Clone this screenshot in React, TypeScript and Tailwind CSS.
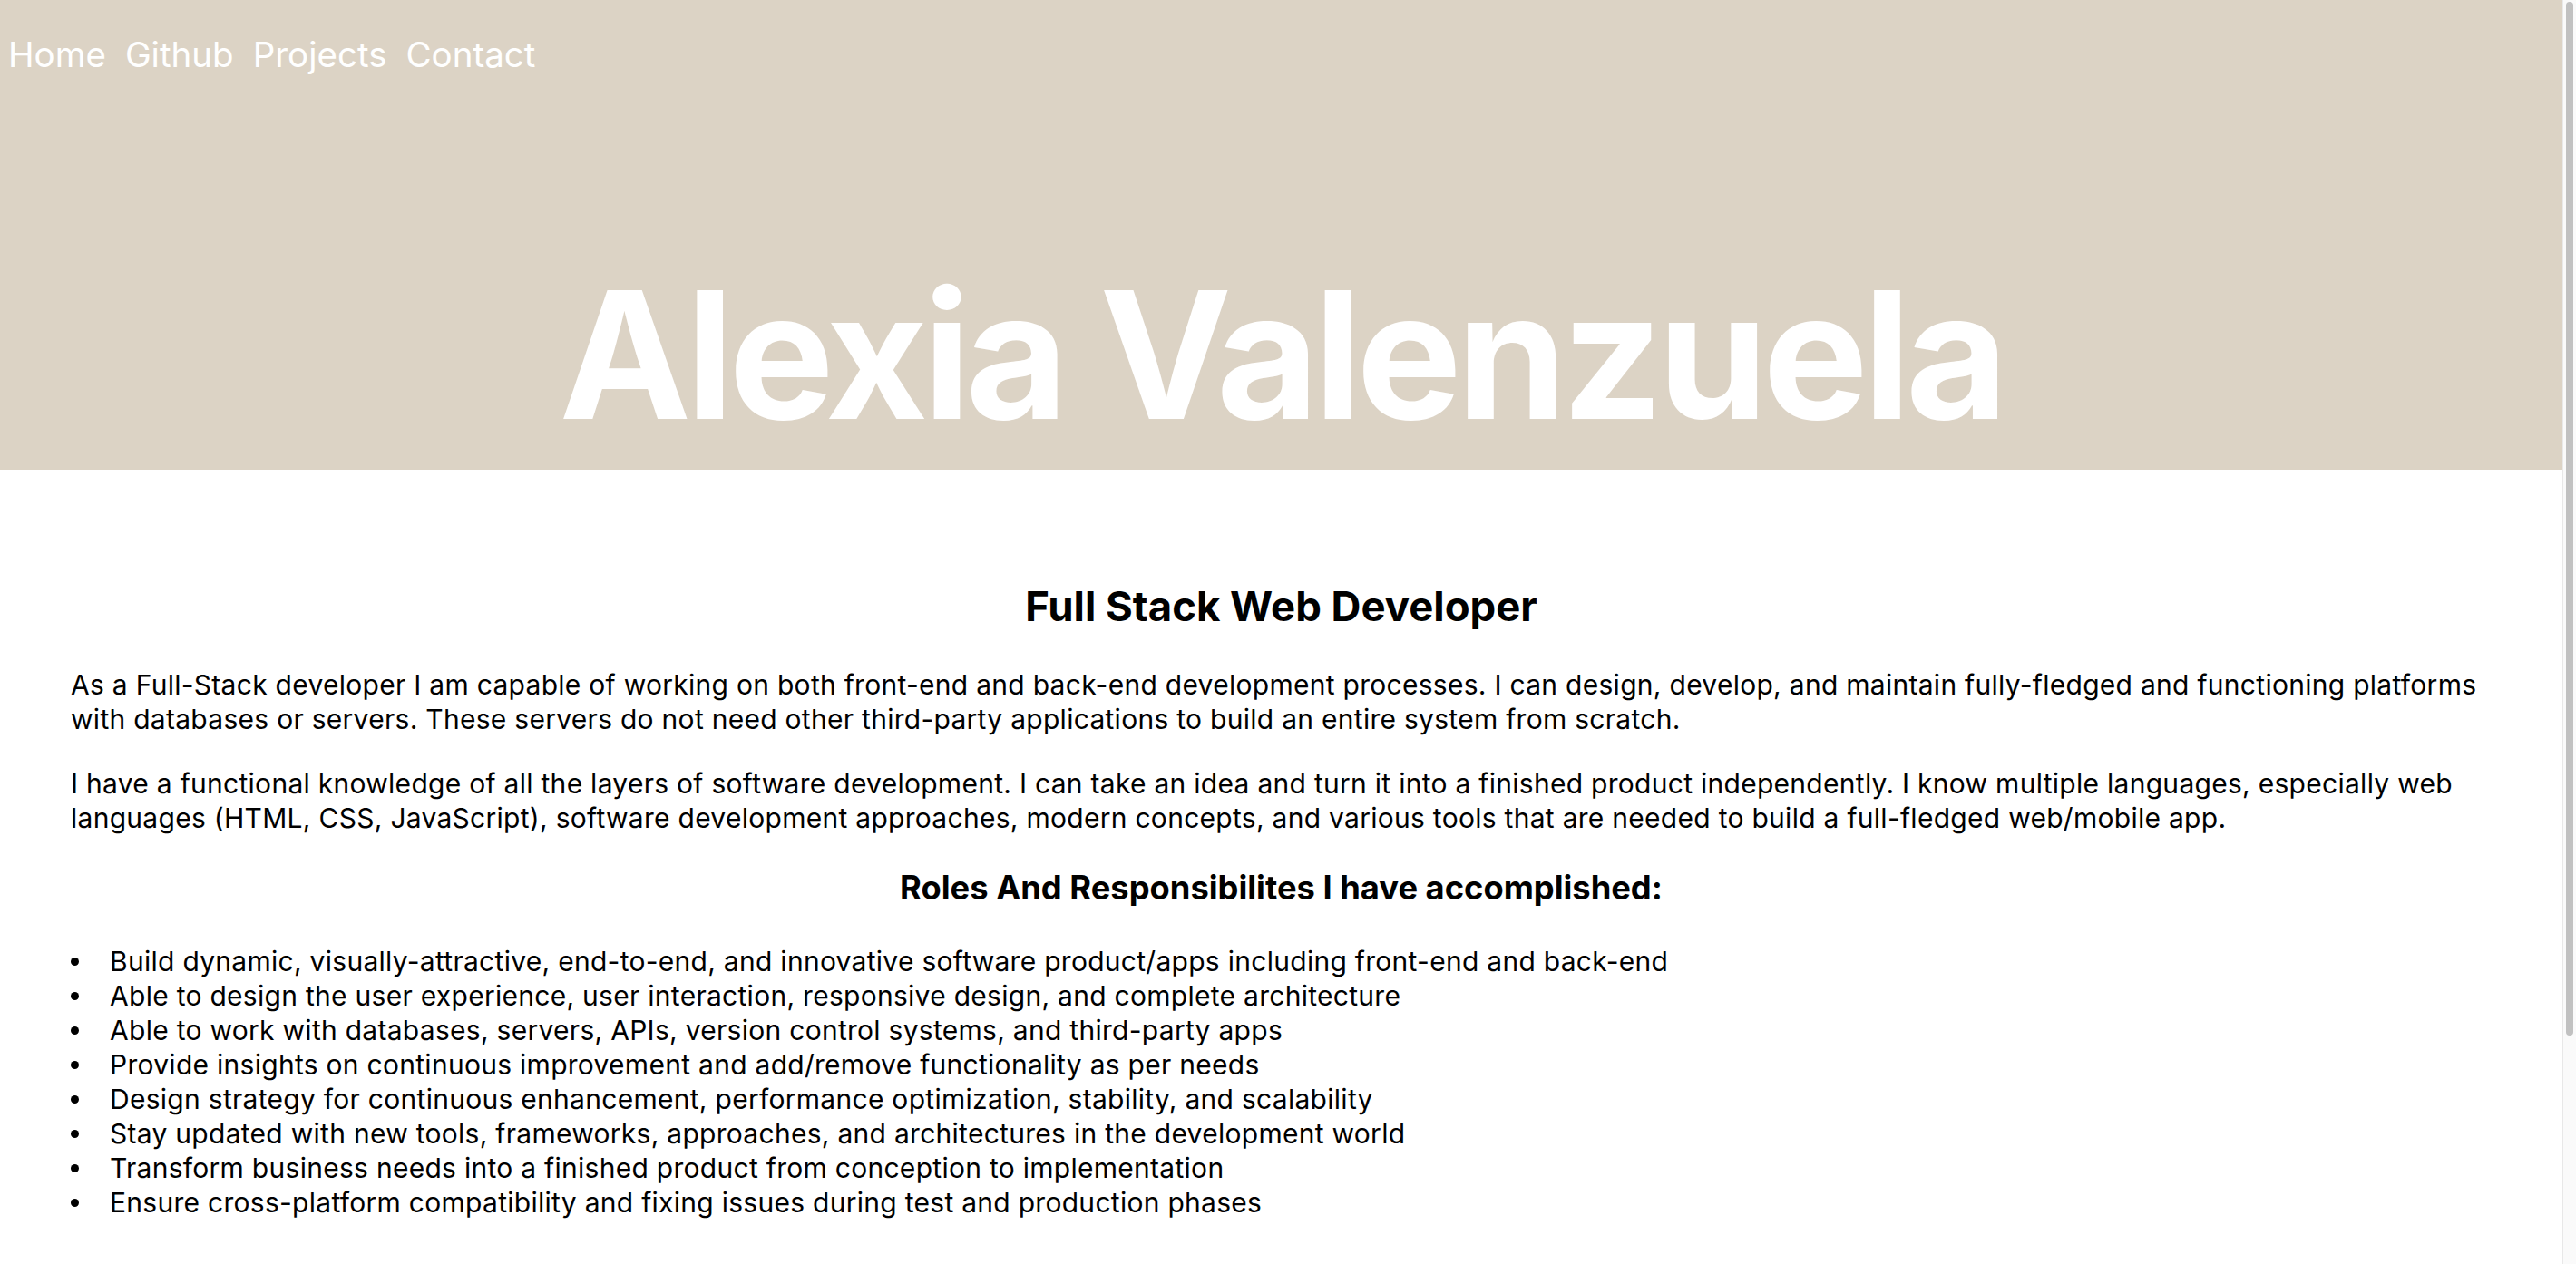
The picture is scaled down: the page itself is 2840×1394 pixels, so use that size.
const navLinks = ["Home", "Github", "Projects", "Contact"];

const roles = [
  "Build dynamic, visually-attractive, end-to-end, and innovative software product/apps including front-end and back-end",
  "Able to design the user experience, user interaction, responsive design, and complete architecture",
  "Able to work with databases, servers, APIs, version control systems, and third-party apps",
  "Provide insights on continuous improvement and add/remove functionality as per needs",
  "Design strategy for continuous enhancement, performance optimization, stability, and scalability",
  "Stay updated with new tools, frameworks, approaches, and architectures in the development world",
  "Transform business needs into a finished product from conception to implementation",
  "Ensure cross-platform compatibility and fixing issues during test and production phases",
];

export default function App() {
  return (
    <div className="flex h-screen overflow-hidden bg-white font-['Inter','Liberation_Sans',sans-serif] text-black">
      <div className="min-w-0 flex-1">
        {/* Header */}
        <header className="flex h-[518px] flex-col bg-[#dcd3c5]">
          <nav className="flex gap-[21px] px-[9px] pt-[37px]">
            {navLinks.map((link) => (
              <a key={link} href="#" className="text-[38.5px] leading-[47px] text-white">
                {link}
              </a>
            ))}
          </nav>
          <div className="flex flex-1 items-end justify-center pb-[29px]">
            <h1 className="text-[195px] font-bold leading-[195px] tracking-[-5.7px] text-white">
              Alexia Valenzuela
            </h1>
          </div>
        </header>

        {/* About */}
        <main className="px-[78px] pt-[123px] pb-[360px]">
          <h2 className="text-center text-[45.5px] font-bold leading-[56px]">Full Stack Web Developer</h2>
          <p className="mt-[39px] text-[30px] leading-[38px] tracking-[0.28px]">
            As a Full-Stack developer I am capable of working on both front-end and back-end development processes. I
            can design, develop, and maintain fully-fledged and functioning platforms with databases or servers. These
            servers do not need other third-party applications to build an entire system from scratch.
          </p>
          <p className="mt-[33px] text-[30px] leading-[38px] tracking-[0.28px]">
            I have a functional knowledge of all the layers of software development. I can take an idea and turn it into
            a finished product independently. I know multiple languages, especially web languages (HTML, CSS,
            JavaScript), software development approaches, modern concepts, and various tools that are needed to build a
            full-fledged web/mobile app.
          </p>
          <h3 className="mt-[37px] text-center text-[36.3px] font-bold leading-[42px]">
            Roles And Responsibilites I have accomplished:
          </h3>
          <ul className="mt-[41px]">
            {roles.map((role) => (
              <li key={role} className="flex text-[30px] leading-[38px] tracking-[0.28px]">
                <span className="flex h-[38px] w-[43px] shrink-0 items-center">
                  <span className="h-[9px] w-[9px] rounded-full bg-black" />
                </span>
                <span>{role}</span>
              </li>
            ))}
          </ul>
        </main>
      </div>

      {/* Scrollbar */}
      <div className="w-[15px] shrink-0 border-l border-[#e8e8e8] bg-[#fafafa] px-[3px] pt-[2px]">
        <div className="h-[1140px] rounded-full bg-[#c1c1c1]" />
      </div>
    </div>
  );
}
